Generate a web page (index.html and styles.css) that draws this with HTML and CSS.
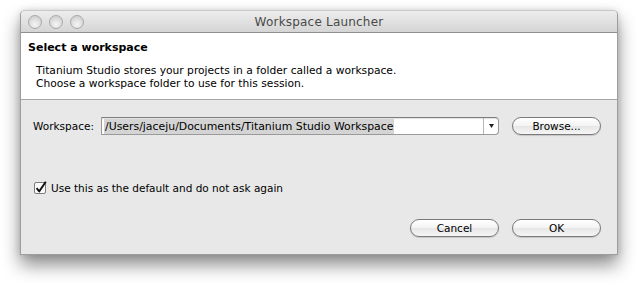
FILE: index.html
```html
<!DOCTYPE html>
<html lang="en">
<head>
    <meta charset="UTF-8">
    <title>Workspace Launcher</title>
    <link rel="stylesheet" href="styles.css">
</head>
<body>
    <div class="window">
        <div class="titlebar">
            <div class="lights">
                <span class="light"></span>
                <span class="light"></span>
                <span class="light"></span>
            </div>
            <div class="title">Workspace Launcher</div>
        </div>
        <div class="header">
            <h1>Select a workspace</h1>
            <p>Titanium Studio stores your projects in a folder called a workspace.<br>Choose a workspace folder to use for this session.</p>
        </div>
        <div class="content">
            <div class="ws-row">
                <label class="ws-label">Workspace:</label>
                <div class="combo">
                    <div class="combo-text"><span class="sel">/Users/jaceju/Documents/Titanium Studio Workspace</span></div>
                    <div class="combo-arrow">
                        <svg width="5" height="4" viewBox="0 0 5 4"><path d="M0 0h5L2.5 4z" fill="#222"/></svg>
                    </div>
                </div>
                <button class="btn">Browse...</button>
            </div>
            <div class="check-row">
                <span class="checkbox">
                    <svg width="14" height="14" viewBox="0 0 14 14">
                        <rect x="0.5" y="1.5" width="11" height="11" rx="1.5" fill="#fbfbfb" stroke="#7d7d7d"/>
                        <path d="M2.6 7.2 L5.2 10.4 L11.8 0.8" fill="none" stroke="#111" stroke-width="1.9" stroke-linejoin="round"/>
                    </svg>
                </span>
                <span>Use this as the default and do not ask again</span>
            </div>
            <div class="actions">
                <button class="btn">Cancel</button>
                <button class="btn">OK</button>
            </div>
        </div>
    </div>
</body>
</html>
```

FILE: styles.css
```css
* {
    box-sizing: border-box;
    margin: 0;
    padding: 0;
}
html, body {
    height: 100%;
}
body {
    background: #fff;
    font-family: 'DejaVu Sans', 'Liberation Sans', sans-serif;
    font-size: 11px;
    color: #000;
    padding-top: 10px;
}
.window {
    width: 598px;
    height: 245px;
    margin-left: 20px;
    border: 1px solid #9d9d9d;
    border-top-color: #c8c8c8;
    border-radius: 5px 5px 0 0;
    background: #e8e8e8;
    box-shadow: 0 10px 18px rgba(0, 0, 0, 0.45), 0 0 6px rgba(0, 0, 0, 0.12);
    display: flex;
    flex-direction: column;
}
.titlebar {
    height: 22px;
    background: linear-gradient(#ededed, #d5d5d5);
    border-bottom: 1px solid #8e8e8e;
    border-radius: 4px 4px 0 0;
    position: relative;
    display: flex;
    align-items: center;
    justify-content: center;
}
.lights {
    position: absolute;
    left: 7px;
    top: 4px;
    display: flex;
    gap: 7px;
}
.light {
    width: 14px;
    height: 14px;
    border-radius: 50%;
    border: 1px solid #a9a9a9;
    background: radial-gradient(circle at 50% 70%, #f6f6f6, #d2d2d2 75%);
}
.title {
    font-size: 12px;
    color: #4a4a4a;
    letter-spacing: 0.2px;
}
.header {
    height: 67px;
    background: #fff;
    border-bottom: 1px solid #a6a6a6;
    padding: 8px 0 0 7px;
}
h1 {
    font-size: 11px;
    font-weight: bold;
    line-height: 14px;
}
.header p {
    margin: 9px 0 0 8px;
    line-height: 13px;
    font-size: 10.7px;
}
.content {
    flex: 1;
    padding: 17px 0 0 12px;
    display: flex;
    flex-direction: column;
}
.ws-row {
    display: flex;
    align-items: center;
    height: 18px;
}
.ws-label {
    width: 68px;
    font-size: 10.5px;
}
.combo {
    width: 398px;
    height: 18px;
    display: flex;
    background: #fff;
    border: 1px solid #9a9a9a;
    border-top-color: #7d7d7d;
    border-radius: 0 4px 4px 0;
    box-shadow: inset 0 1px 1px rgba(0, 0, 0, 0.12);
}
.combo-text {
    flex: 1;
    padding: 1px 0 0 2px;
    overflow: hidden;
    white-space: nowrap;
}
.sel {
    display: inline-block;
    background: #d4d4d4;
    font-size: 10.9px;
    line-height: 15px;
    padding: 0 1px;
}
.combo-arrow {
    width: 15px;
    border-left: 1px solid #b5b5b5;
    display: flex;
    align-items: center;
    justify-content: center;
}
.btn {
    width: 89px;
    height: 18px;
    margin-left: 13px;
    border: 1px solid #7a7a7a;
    border-radius: 9px;
    background: linear-gradient(#ffffff, #f3f3f3 50%, #e6e6e6 51%, #f6f6f6);
    box-shadow: 0 1px 1px rgba(0, 0, 0, 0.15);
    font-family: inherit;
    font-size: 10.5px;
    color: #000;
}
.check-row {
    margin-top: 46px;
    display: flex;
    align-items: center;
    gap: 3px;
    padding-left: 1px;
    font-size: 10.5px;
}
.checkbox {
    display: flex;
}
.actions {
    margin-top: 24px;
    display: flex;
    justify-content: flex-end;
    padding-right: 16px;
}
```
